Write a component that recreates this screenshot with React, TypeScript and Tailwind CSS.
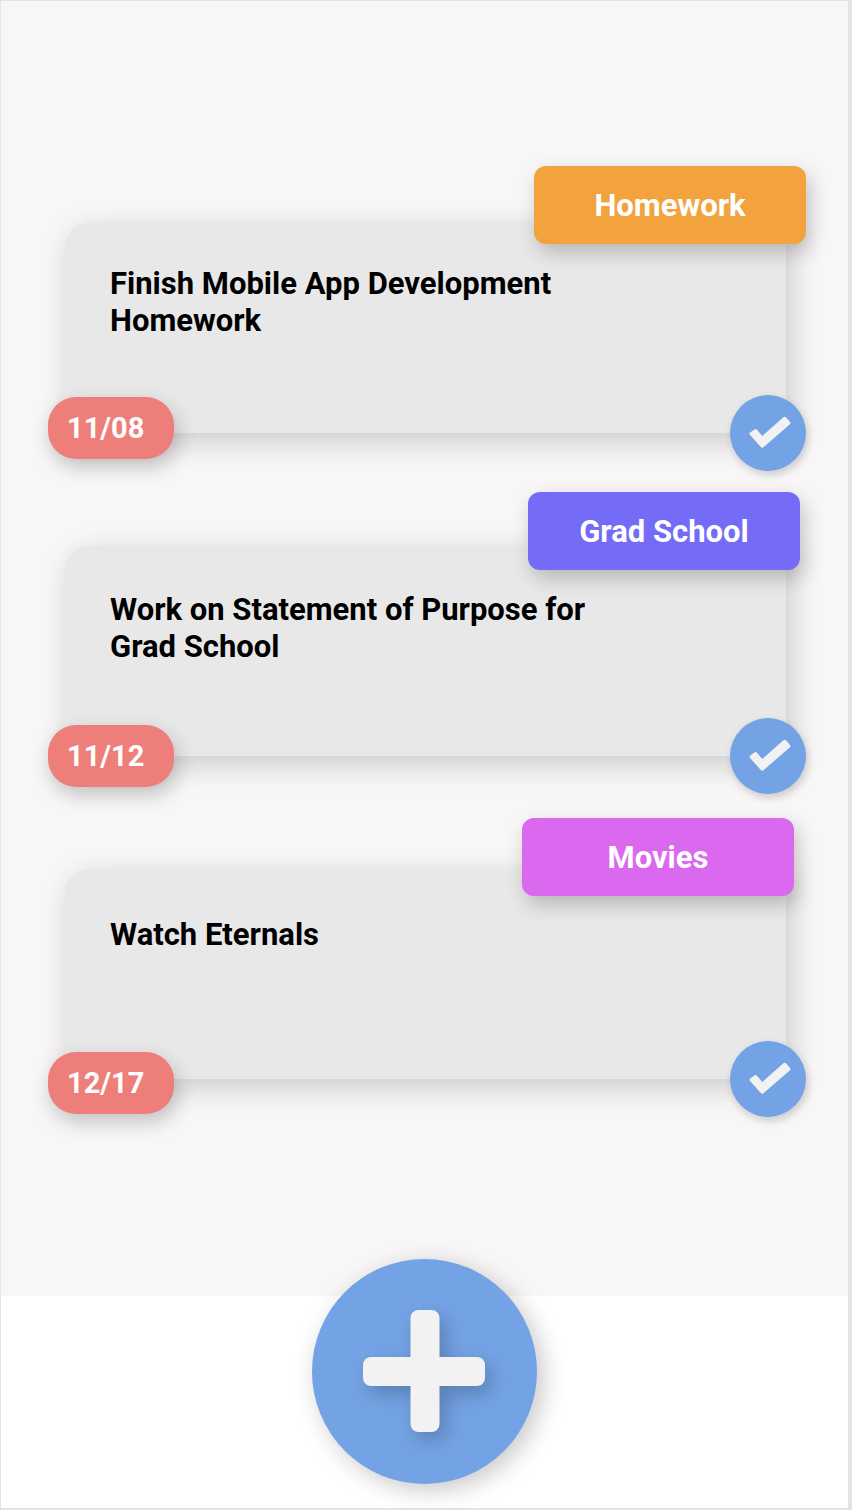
type Task = {
  title: string;
  date: string;
  category: string;
  card: string;
  tag: string;
  badge: string;
};

const tasks: Task[] = [
  {
    title: 'Finish Mobile App Development Homework',
    date: '11/08',
    category: 'Homework',
    card: 'pt-[42px]',
    tag: '-right-5 -top-[57px] bg-[#f2a33e]',
    badge: '-bottom-[26px]',
  },
  {
    title: 'Work on Statement of Purpose for Grad School',
    date: '11/12',
    category: 'Grad School',
    card: 'pt-[45px]',
    tag: '-right-3.5 -top-[54px] bg-[#746bf6]',
    badge: '-bottom-[31px]',
  },
  {
    title: 'Watch Eternals',
    date: '12/17',
    category: 'Movies',
    card: 'pt-[47px]',
    tag: '-right-2 -top-[51px] bg-[#db69f0]',
    badge: '-bottom-[35px]',
  },
];

function CheckIcon() {
  return (
    <svg viewBox="0 0 76 76" className="size-full" aria-hidden="true">
      <path
        d="M20.2 37.6L24.4 34.4Q25.8 33.4 27 34.8L32.3 41L53.4 22.2Q54.8 21 56.2 22.5L60 26.9Q61 28.2 59.7 29.4L33.4 52.3Q32 53.5 30.8 52.1L19.9 39.7Q19 38.5 20.2 37.6Z"
        fill="#f2f2f2"
      />
    </svg>
  );
}

function PlusIcon() {
  return (
    <svg
      viewBox="0 0 123 123"
      className="size-[123px] overflow-visible drop-shadow-[6px_8px_10px_rgba(0,0,0,0.22)]"
      aria-hidden="true"
    >
      <rect x="47.5" y="0" width="29" height="122" rx="8" fill="#f2f2f2" />
      <rect x="0" y="47" width="122" height="29" rx="8" fill="#f2f2f2" />
    </svg>
  );
}

function TaskCard({ task }: { task: Task }) {
  return (
    <li
      className={`relative h-[210px] rounded-tl-3xl bg-[#e8e8e8] pl-[45px] pr-40 shadow-[5px_8px_30px_rgba(0,0,0,0.18)] ${task.card}`}
    >
      <h2 className="max-w-[500px] text-[31px] font-bold leading-[37px] text-black">{task.title}</h2>
      <span
        className={`absolute flex h-[78px] w-[272px] items-center justify-center rounded-xl text-[31px] font-bold leading-[37px] text-white shadow-[4px_8px_20px_rgba(0,0,0,0.22)] ${task.tag}`}
      >
        {task.category}
      </span>
      <time
        className={`absolute -left-[17px] flex h-[62px] w-[126px] items-center rounded-[28px] bg-[#ee7e7a] pl-[19px] text-[29px] font-bold leading-8 text-white shadow-[3px_8px_20px_rgba(0,0,0,0.22)] ${task.badge}`}
      >
        {task.date}
      </time>
      <button
        type="button"
        aria-label={`Complete ${task.title}`}
        className="absolute -bottom-[38px] -right-5 size-[76px] rounded-full bg-[#74a3e5] shadow-[2px_4px_8px_rgba(0,0,0,0.18)]"
      >
        <CheckIcon />
      </button>
    </li>
  );
}

export default function App() {
  return (
    <div className="flex min-h-screen flex-col bg-[#e4e4e4] pb-0.5 pl-px pr-1 pt-px font-[Roboto,sans-serif]">
      <main className="bg-[#f8f6f7] pb-[217px] pl-16 pr-[62px] pt-[222px]">
        <ul className="flex flex-col gap-[113px]">
          {tasks.map((task) => (
            <TaskCard key={task.date} task={task} />
          ))}
        </ul>
      </main>
      <footer className="flex grow justify-center bg-white pb-6">
        <button
          type="button"
          aria-label="Add task"
          className="-mt-[37px] flex size-[225px] items-center justify-center rounded-full bg-[#74a3e5] shadow-[6px_6px_24px_rgba(0,0,0,0.22)]"
        >
          <PlusIcon />
        </button>
      </footer>
    </div>
  );
}
